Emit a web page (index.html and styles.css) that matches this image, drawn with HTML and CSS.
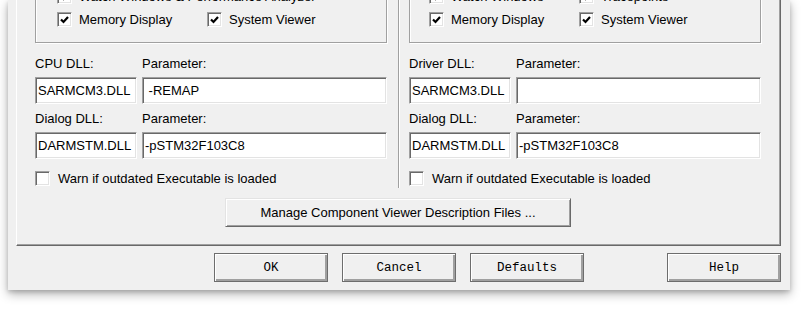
FILE: index.html
```html
<!DOCTYPE html>
<html lang="en">
<head>
  <meta charset="UTF-8">
  <title>Options for Target - Debug</title>
  <link rel="stylesheet" href="styles.css">
</head>
<body>
  <div class="desktop">
    <div class="window">
      <div class="tab-page">
        <div class="halves">
          <div class="half half-left">
            <div class="group">
              <div class="check-row">
                <label class="check"><span class="box"><svg width="13" height="13" viewBox="0 0 13 13"><polyline points="3,6.5 5.5,9 10,4" /></svg></span>Watch Windows &amp; Performance Analyzer</label>
              </div>
              <div class="check-row">
                <label class="check"><span class="box"><svg width="13" height="13" viewBox="0 0 13 13"><polyline points="3,6.5 5.5,9 10,4" /></svg></span>Memory Display</label>
                <label class="check"><span class="box"><svg width="13" height="13" viewBox="0 0 13 13"><polyline points="3,6.5 5.5,9 10,4" /></svg></span>System Viewer</label>
              </div>
            </div>

            <div class="dll-grid">
              <div class="field-label">CPU DLL:</div>
              <div class="field-label">Parameter:</div>
              <input class="field" type="text" value="SARMCM3.DLL">
              <input class="field" type="text" value=" -REMAP">
              <div class="field-label second">Dialog DLL:</div>
              <div class="field-label second">Parameter:</div>
              <input class="field" type="text" value="DARMSTM.DLL">
              <input class="field" type="text" value="-pSTM32F103C8">
            </div>

            <div class="warn-row">
              <label class="check"><span class="box"></span>Warn if outdated Executable is loaded</label>
            </div>
          </div>

          <div class="separator"></div>

          <div class="half half-right">
            <div class="group">
              <div class="check-row">
                <label class="check"><span class="box"><svg width="13" height="13" viewBox="0 0 13 13"><polyline points="3,6.5 5.5,9 10,4" /></svg></span>Watch Windows</label>
                <label class="check"><span class="box"><svg width="13" height="13" viewBox="0 0 13 13"><polyline points="3,6.5 5.5,9 10,4" /></svg></span>Tracepoints</label>
              </div>
              <div class="check-row">
                <label class="check"><span class="box"><svg width="13" height="13" viewBox="0 0 13 13"><polyline points="3,6.5 5.5,9 10,4" /></svg></span>Memory Display</label>
                <label class="check"><span class="box"><svg width="13" height="13" viewBox="0 0 13 13"><polyline points="3,6.5 5.5,9 10,4" /></svg></span>System Viewer</label>
              </div>
            </div>

            <div class="dll-grid">
              <div class="field-label">Driver DLL:</div>
              <div class="field-label">Parameter:</div>
              <input class="field" type="text" value="SARMCM3.DLL">
              <input class="field" type="text" value="">
              <div class="field-label second">Dialog DLL:</div>
              <div class="field-label second">Parameter:</div>
              <input class="field" type="text" value="DARMSTM.DLL">
              <input class="field" type="text" value="-pSTM32F103C8">
            </div>

            <div class="warn-row">
              <label class="check"><span class="box"></span>Warn if outdated Executable is loaded</label>
            </div>
          </div>
        </div>

        <div class="manage-row">
          <button class="manage-btn">Manage Component Viewer Description Files ...</button>
        </div>
      </div>

      <div class="button-row">
        <button class="dlg-btn">OK</button>
        <button class="dlg-btn">Cancel</button>
        <button class="dlg-btn">Defaults</button>
        <button class="dlg-btn help-btn">Help</button>
      </div>
    </div>
  </div>
</body>
</html>
```

FILE: styles.css
```css
body {
  margin: 0;
  background: #fff;
  font-family: "Liberation Sans", Arial, sans-serif;
  font-size: 13px;
  color: #000;
}

.desktop {
  height: 312px;
  padding-left: 8px;
  overflow: hidden;
}

.window {
  box-sizing: border-box;
  width: 782px;
  padding: 0 9px 8px 8px;
  background: #f0f0f0;
  box-shadow: 0 4px 10px rgba(0,0,0,0.3), 0 2px 4px rgba(0,0,0,0.15);
}

.tab-page {
  border-left: 1px solid #fff;
  border-right: 1px solid #696969;
  border-bottom: 1px solid #696969;
  box-shadow: inset -1px -1px 0 #a0a0a0;
  padding: 0 19px 18px 18px;
}

.halves {
  display: flex;
}

.half-left {
  width: 352px;
}

.half-right {
  flex: 1;
}

.separator {
  width: 1px;
  background: #a0a0a0;
  border-right: 1px solid #fff;
  margin: 0 9px 2px 11px;
}

.group {
  margin-top: -16px;
  padding: 0 0 11px 21px;
  border: 1px solid #a0a0a0;
  box-shadow: 1px 1px 0 #fff, inset 1px 1px 0 #fff;
}

.half-right .group {
  padding-left: 19px;
}

.check-row {
  display: grid;
  grid-template-columns: 150px auto;
  align-items: center;
  height: 23px;
}

.check {
  display: flex;
  align-items: center;
  white-space: nowrap;
}

.box {
  flex-shrink: 0;
  box-sizing: border-box;
  width: 15px;
  height: 15px;
  margin-right: 7px;
  background: #fff;
  border: 1px solid;
  border-color: #a0a0a0 #fff #fff #a0a0a0;
  box-shadow: inset 1px 1px 0 #696969, inset -1px -1px 0 #e3e3e3;
}

.box svg {
  display: block;
}

.box polyline {
  fill: none;
  stroke: #000;
  stroke-width: 2.2;
}

.dll-grid {
  display: grid;
  grid-template-columns: 102px 1fr;
  column-gap: 5px;
  row-gap: 4px;
  margin-top: 12px;
}

.field-label {
  height: 18px;
  line-height: 18px;
}

.field-label.second {
  margin-top: 2px;
}

.field {
  box-sizing: border-box;
  width: 100%;
  height: 27px;
  margin: 0;
  padding: 0 2px;
  font-family: "Liberation Sans", Arial, sans-serif;
  font-size: 13px;
  color: #000;
  background: #fff;
  border: 1px solid;
  border-color: #a0a0a0 #fff #fff #a0a0a0;
  box-shadow: inset 1px 1px 0 #696969, inset -1px -1px 0 #e3e3e3;
  outline: none;
}

.warn-row {
  display: flex;
  align-items: center;
  height: 23px;
  margin-top: 8px;
}

.warn-row .box {
  margin-right: 8px;
}

.manage-row {
  display: flex;
  justify-content: center;
  margin-top: 8px;
}

.manage-btn {
  width: 346px;
  height: 29px;
  font-family: "Liberation Sans", Arial, sans-serif;
  font-size: 13px;
  color: #000;
  background: #f0f0f0;
  border: 1px solid;
  border-color: #e3e3e3 #696969 #696969 #e3e3e3;
  box-shadow: inset 1px 1px 0 #fff, inset -1px -1px 0 #a0a0a0;
}

.button-row {
  display: flex;
  gap: 14px;
  margin-top: 7px;
  padding-left: 198px;
}

.dlg-btn {
  width: 114px;
  height: 29px;
  font-family: "Liberation Mono", "Courier New", monospace;
  font-size: 12.5px;
  color: #000;
  background: #f0f0f0;
  border: 1px solid #6d6d6d;
  box-shadow: inset 1px 1px 0 #fff, inset -2px -2px 0 #a0a0a0;
}

.help-btn {
  margin-left: auto;
}
```
